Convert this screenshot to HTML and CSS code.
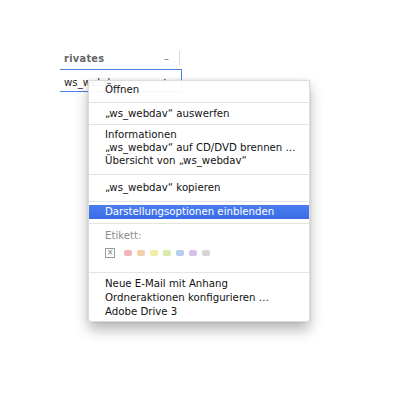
FILE: index.html
```html
<!DOCTYPE html>
<html>
<head>
<meta charset="utf-8">
<link rel="stylesheet" href="styles.css">
</head>
<body>
<div class="stage">
  <div class="sidebar">
    <div class="heading">
      <span class="heading-text">rivates</span>
      <span class="heading-ctrl">–</span>
      <span class="heading-line"></span>
    </div>
    <div class="field">
      <span class="field-text">ws_webdav</span>
      <span class="field-arrow">▲</span>
      <span class="field-arrow small">·</span>
    </div>
  </div>

  <div class="menu">
    <div class="group g1"><div class="item">Öffnen</div></div>
    <div class="sep"></div>
    <div class="group g2"><div class="item">„ws_webdav“ auswerfen</div></div>
    <div class="sep"></div>
    <div class="group g3">
      <div class="item tight">Informationen</div>
      <div class="item tight">„ws_webdav“ auf CD/DVD brennen …</div>
      <div class="item tight">Übersicht von „ws_webdav“</div>
    </div>
    <div class="sep"></div>
    <div class="group g4"><div class="item">„ws_webdav“ kopieren</div></div>
    <div class="sep"></div>
    <div class="group g5"><div class="item active">Darstellungsoptionen einblenden</div></div>
    <div class="sep"></div>
    <div class="group g6">
      <div class="item label">Etikett:</div>
      <div class="swatches">
        <span class="none">×</span>
        <span class="sw red"></span>
        <span class="sw orange"></span>
        <span class="sw yellow"></span>
        <span class="sw green"></span>
        <span class="sw blue"></span>
        <span class="sw purple"></span>
        <span class="sw gray"></span>
      </div>
    </div>
    <div class="sep"></div>
    <div class="group g7">
      <div class="item">Neue E-Mail mit Anhang</div>
      <div class="item">Ordneraktionen konfigurieren …</div>
      <div class="item">Adobe Drive 3</div>
    </div>
  </div>
</div>
</body>
</html>
```

FILE: styles.css
```css
html, body {
  margin: 0;
  padding: 0;
  background: #ffffff;
}
body {
  width: 400px;
  height: 400px;
  overflow: hidden;
  font-family: "DejaVu Sans", "Liberation Sans", sans-serif;
  font-size: 10.2px;
  color: #111111;
}
.stage {
  position: relative;
  width: 400px;
  height: 400px;
}
.sidebar {
  padding: 50px 0 0 60px;
  width: 122px;
}
.heading {
  display: flex;
  align-items: center;
  height: 16px;
  padding-left: 4px;
  color: #666;
  font-weight: bold;
  font-size: 9.8px;
}
.heading-text {
  flex: 1;
  letter-spacing: 0.3px;
}
.heading-ctrl {
  color: #777;
  margin-right: 10px;
  font-weight: normal;
}
.heading-line {
  width: 1px;
  height: 14px;
  background: #d8d8d8;
  margin-right: 2px;
}
.field {
  margin-top: 3px;
  height: 20px;
  padding-top: 1px;
  border: 1.5px solid #4a7fe2;
  border-left: none;
  display: flex;
  align-items: center;
  padding-left: 4px;
  color: #222;
}
.field-text {
  flex: 1;
  padding-top: 3px;
}
.field-arrow {
  font-size: 6px;
  color: #555;
  margin-right: 10px;
  align-self: flex-start;
  margin-top: 5px;
}
.field-arrow.small {
  margin-right: 2px;
}
.menu {
  position: absolute;
  left: 88px;
  top: 80px;
  width: 220px;
  background: rgba(255, 255, 255, 0.94);
  border: 1px solid #dcdcdc;
  border-radius: 0 0 4px 4px;
  box-shadow: 0 8px 14px rgba(0, 0, 0, 0.28), 0 0 3px rgba(0, 0, 0, 0.12);
}
.sep {
  height: 1px;
  background: #e4e4e4;
}
.item {
  height: 14px;
  line-height: 14px;
  padding-left: 16px;
  white-space: nowrap;
}
.item.tight {
  height: 13px;
  line-height: 13px;
}
.g1 { padding: 2px 0 5px; }
.g2 { padding: 4px 0 3px; }
.g3 { padding: 3px 0 7px; }
.g4 { padding: 6px 0 6px; }
.g5 { padding: 3px 0 4px; }
.g6 { padding: 5px 0 14px; }
.g7 { padding: 4px 0 2px; }
.item.active {
  background: linear-gradient(#4a7ef0, #3a6be6);
  color: #ffffff;
}
.item.label {
  color: #8c8c8c;
}
.swatches {
  display: flex;
  align-items: center;
  padding-left: 16px;
  margin-top: 5px;
  height: 10px;
  gap: 5px;
}
.none {
  width: 8px;
  height: 8px;
  border: 1px solid #9a9a9a;
  font-size: 8px;
  line-height: 8px;
  text-align: center;
  color: #777;
  margin-right: 4px;
}
.sw {
  width: 8px;
  height: 6px;
  border-radius: 2px;
}
.red { background: #f1b6ba; }
.orange { background: #f3d0a8; }
.yellow { background: #f1eca2; }
.green { background: #d9eaa9; }
.blue { background: #b3cef1; }
.purple { background: #d7bfe9; }
.gray { background: #d6d6d6; }
```
